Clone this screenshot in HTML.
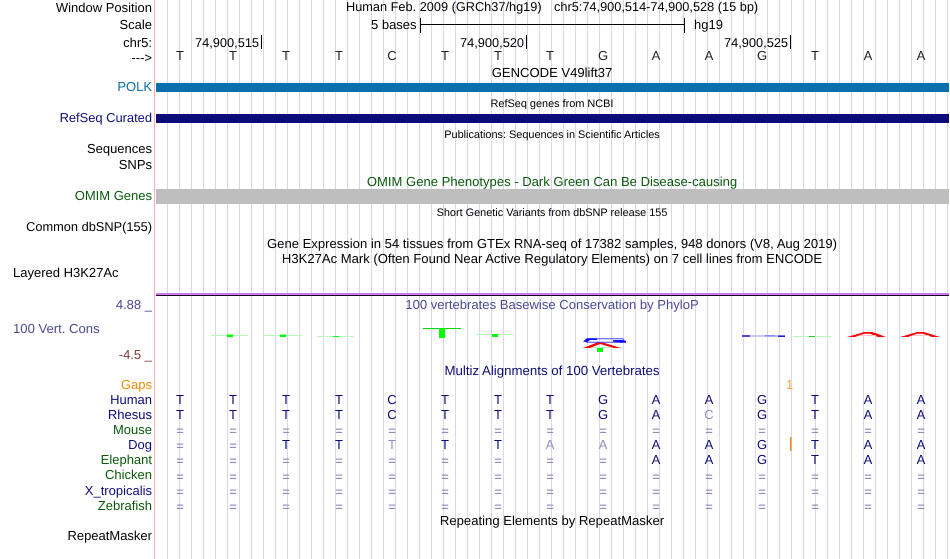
<!DOCTYPE html>
<html><head><meta charset="utf-8"><style>
html,body{margin:0;padding:0;background:#fff}
#p{position:relative;width:950px;height:559px;overflow:hidden;background:#fff;font-family:"Liberation Sans",sans-serif;font-size:13px;color:#000;text-rendering:geometricPrecision}
#g{position:absolute;left:156px;top:0;width:794px;height:559px;background-image:linear-gradient(to right,transparent 11px,#dad6f2 11px);background-size:12px 559px}
#pk{position:absolute;left:154px;top:0;width:1px;height:559px;background:#ffb0b0}
.b{position:absolute;left:156px;width:793px}
.l,.c,.a{position:absolute;white-space:nowrap;line-height:14px;height:14px}
.l{right:798px;text-align:right}
.c{transform:translateX(-50%);font-size:13.07px}
.c.s{font-size:10.9px}
.n{font-size:12.8px}
.r{position:absolute;left:0;width:950px;height:14px;line-height:14px;color:#0c0c78}
.r span{position:absolute;width:20px;text-align:center}
.r span:nth-child(1){left:170px}.r span:nth-child(2){left:223px}.r span:nth-child(3){left:276px}.r span:nth-child(4){left:329px}.r span:nth-child(5){left:382px}.r span:nth-child(6){left:435px}.r span:nth-child(7){left:488px}.r span:nth-child(8){left:540px}.r span:nth-child(9){left:593px}.r span:nth-child(10){left:646px}.r span:nth-child(11){left:699px}.r span:nth-child(12){left:752px}.r span:nth-child(13){left:805px}.r span:nth-child(14){left:858px}.r span:nth-child(15){left:911px}
.r i{font-style:normal;color:#8f8fc0}
.r span.q,.e span{color:#8080b8;top:1px}
</style></head><body><div id="p">
<div id="g"></div><div id="pk"></div>

<div class="l" style="top:1px">Window Position</div>
<div class="l" style="top:18px">Scale</div>
<div class="l" style="top:36px">chr5:</div>
<div class="l" style="top:51px">---&gt;</div>
<div class="l" style="top:80px;color:#0c6fad">POLK</div>
<div class="l" style="top:111px;color:#0c0c78;font-size:12.9px">RefSeq Curated</div>
<div class="l" style="top:142px">Sequences</div>
<div class="l" style="top:158px">SNPs</div>
<div class="l" style="top:189px;color:#0a5a0a">OMIM Genes</div>
<div class="l n" style="top:220px">Common dbSNP(155)</div>
<div class="a" style="left:13px;top:266px">Layered H3K27Ac</div>
<div class="l" style="top:298px;color:#4a4a96">4.88 _</div>
<div class="a" style="left:13px;top:322px;color:#4a4a96;font-size:13.1px">100 Vert. Cons</div>
<div class="l" style="top:348px;color:#843c3c">-4.5 _</div>
<div class="l" style="top:378px;color:#f28c0a">Gaps</div>
<div class="l" style="top:393px;color:#0c0c78">Human</div>
<div class="l" style="top:408px;color:#0c0c78">Rhesus</div>
<div class="l" style="top:423px;color:#0a5a0a">Mouse</div>
<div class="l" style="top:438px;color:#0c0c78">Dog</div>
<div class="l" style="top:453px;color:#0a5a0a">Elephant</div>
<div class="l" style="top:468px;color:#0a5a0a">Chicken</div>
<div class="l" style="top:484px;color:#0c0c78">X_tropicalis</div>
<div class="l" style="top:499px;color:#0a5a0a">Zebrafish</div>
<div class="l" style="top:529px">RepeatMasker</div>

<div class="a" style="left:346px;top:0;font-size:12.75px">Human Feb. 2009 (GRCh37/hg19)</div>
<div class="a" style="left:554px;top:0;font-size:12.75px">chr5:74,900,514-74,900,528 (15 bp)</div>
<div class="a" style="left:371px;top:18px">5 bases</div>
<div class="a" style="left:694px;top:18px">hg19</div>
<div style="position:absolute;left:420px;top:18px;width:1px;height:15px;background:#000"></div>
<div style="position:absolute;left:684px;top:18px;width:1px;height:15px;background:#000"></div>
<div style="position:absolute;left:420px;top:24px;width:264px;height:1px;background:#000"></div>

<div class="a n" style="left:195px;top:36px">74,900,515</div>
<div style="position:absolute;left:261px;top:35px;width:1px;height:14px;background:#000"></div>
<div class="a n" style="left:460px;top:36px">74,900,520</div>
<div style="position:absolute;left:526px;top:35px;width:1px;height:14px;background:#000"></div>
<div class="a n" style="left:724px;top:36px">74,900,525</div>
<div style="position:absolute;left:790px;top:35px;width:1px;height:14px;background:#000"></div>

<div class="r" style="top:49px;color:#222"><span>T</span><span>T</span><span>T</span><span>T</span><span>C</span><span>T</span><span>T</span><span>T</span><span>G</span><span>A</span><span>A</span><span>G</span><span>T</span><span>A</span><span>A</span></div>

<div class="c" style="left:552px;top:66px">GENCODE V49lift37</div>
<div class="b" style="top:83px;height:9px;background:#0c6fad"></div>
<div class="c s" style="left:552px;top:97px">RefSeq genes from NCBI</div>
<div class="b" style="top:114px;height:9px;background:#0c0c78"></div>
<div class="c s" style="left:552px;top:128px">Publications: Sequences in Scientific Articles</div>
<div class="c" style="left:552px;top:175px;color:#0a5a0a">OMIM Gene Phenotypes - Dark Green Can Be Disease-causing</div>
<div class="b" style="top:189px;height:15px;background:#bebebe"></div>
<div class="c s" style="left:552px;top:206px">Short Genetic Variants from dbSNP release 155</div>
<div class="c" style="left:552px;top:237px">Gene Expression in 54 tissues from GTEx RNA-seq of 17382 samples, 948 donors (V8, Aug 2019)</div>
<div class="c" style="left:552px;top:252px">H3K27Ac Mark (Often Found Near Active Regulatory Elements) on 7 cell lines from ENCODE</div>

<div class="b" style="top:293px;height:2px;background:#cc7af0"></div>
<div class="b" style="top:295px;height:1px;background:#200820"></div>
<div class="c" style="left:552px;top:298px;color:#4a4a96">100 vertebrates Basewise Conservation by PhyloP</div>

<svg style="position:absolute;left:0;top:0" width="950" height="559" viewBox="0 0 950 559" fill="none">
<g fill="#b8f8b8"><rect x="211" y="335" width="37" height="1"/><rect x="264" y="335" width="38" height="1"/><rect x="317" y="336" width="37" height="1"/><rect x="476" y="334" width="38" height="1"/><rect x="582" y="347" width="40" height="1"/><rect x="793" y="336" width="38" height="1"/></g>
<rect x="423" y="328" width="38" height="1" fill="#00e000"/>
<g fill="#00ff00"><rect x="227" y="334.500" width="6" height="2.500"/><rect x="280" y="334.500" width="6" height="2.500"/><rect x="333" y="336" width="6" height="1"/><rect x="439" y="329" width="6" height="9"/><rect x="492" y="334" width="6" height="3"/><rect x="597" y="348" width="6" height="4"/></g>
<rect x="809" y="336" width="6" height="1" fill="#20d020"/>
<path d="M583 348L597 342.500H603L621 348H614L600 344L590 348Z" fill="#ff0000"/>
<rect x="585.500" y="338.800" width="38.500" height="3.400" rx="1.700" stroke="#4848ff" stroke-width="1"/>
<path d="M583 341.500L587 338.300H597V340H590L587 342.300Z" fill="#1010ff"/>
<path d="M613 340H623L626 341V342.800H620L613 341.500Z" fill="#1010ff"/>
<rect x="742" y="335" width="43" height="2" fill="#c8c8f8"/>
<rect x="742" y="335" width="8" height="2" fill="#4a4af0"/>
<rect x="765" y="335" width="10" height="1.500" fill="#8888f0"/>
<rect x="778" y="335.500" width="7" height="1.500" fill="#2020d0"/>
<path d="M847 337L861 333L864 332H872L876 333.300L886 337H878L870 333.700H864L855 337Z" fill="#ff0000"/>
<path d="M900 337L914 333L917 332H924L928 333.300L940 337H932L923 333.700H917L908 337Z" fill="#ff0000"/>
<rect x="860" y="335" width="16" height="1" fill="#ffc8c8"/>
<rect x="913" y="335" width="16" height="1" fill="#ffc8c8"/>
<rect x="790" y="437" width="1.500" height="14" fill="#f28c0a"/>
</svg>

<div class="c" style="left:552px;top:364px;color:#0c0c78;font-size:13.25px">Multiz Alignments of 100 Vertebrates</div>
<div class="a" style="left:786px;top:378px;color:#f2a040">1</div>

<div class="r" style="top:393px"><span>T</span><span>T</span><span>T</span><span>T</span><span>C</span><span>T</span><span>T</span><span>T</span><span>G</span><span>A</span><span>A</span><span>G</span><span>T</span><span>A</span><span>A</span></div>
<div class="r" style="top:408px"><span>T</span><span>T</span><span>T</span><span>T</span><span>C</span><span>T</span><span>T</span><span>T</span><span>G</span><span>A</span><span><i>C</i></span><span>G</span><span>T</span><span>A</span><span>A</span></div>
<div class="r e" style="top:423px"><span>=</span><span>=</span><span>=</span><span>=</span><span>=</span><span>=</span><span>=</span><span>=</span><span>=</span><span>=</span><span>=</span><span>=</span><span>=</span><span>=</span><span>=</span></div>
<div class="r" style="top:438px"><span class="q">=</span><span class="q">=</span><span>T</span><span>T</span><span><i>T</i></span><span>T</span><span>T</span><span><i>A</i></span><span><i>A</i></span><span>A</span><span>A</span><span>G</span><span>T</span><span>A</span><span>A</span></div>
<div class="r" style="top:453px"><span class="q">=</span><span class="q">=</span><span class="q">=</span><span class="q">=</span><span class="q">=</span><span class="q">=</span><span class="q">=</span><span class="q">=</span><span class="q">=</span><span>A</span><span>A</span><span>G</span><span>T</span><span>A</span><span>A</span></div>
<div class="r e" style="top:469px"><span>=</span><span>=</span><span>=</span><span>=</span><span>=</span><span>=</span><span>=</span><span>=</span><span>=</span><span>=</span><span>=</span><span>=</span><span>=</span><span>=</span><span>=</span></div>
<div class="r e" style="top:484px"><span>=</span><span>=</span><span>=</span><span>=</span><span>=</span><span>=</span><span>=</span><span>=</span><span>=</span><span>=</span><span>=</span><span>=</span><span>=</span><span>=</span><span>=</span></div>
<div class="r e" style="top:499px"><span>=</span><span>=</span><span>=</span><span>=</span><span>=</span><span>=</span><span>=</span><span>=</span><span>=</span><span>=</span><span>=</span><span>=</span><span>=</span><span>=</span><span>=</span></div>

<div class="c" style="left:552px;top:514px;font-size:13.1px">Repeating Elements by RepeatMasker</div>
</div></body></html>
